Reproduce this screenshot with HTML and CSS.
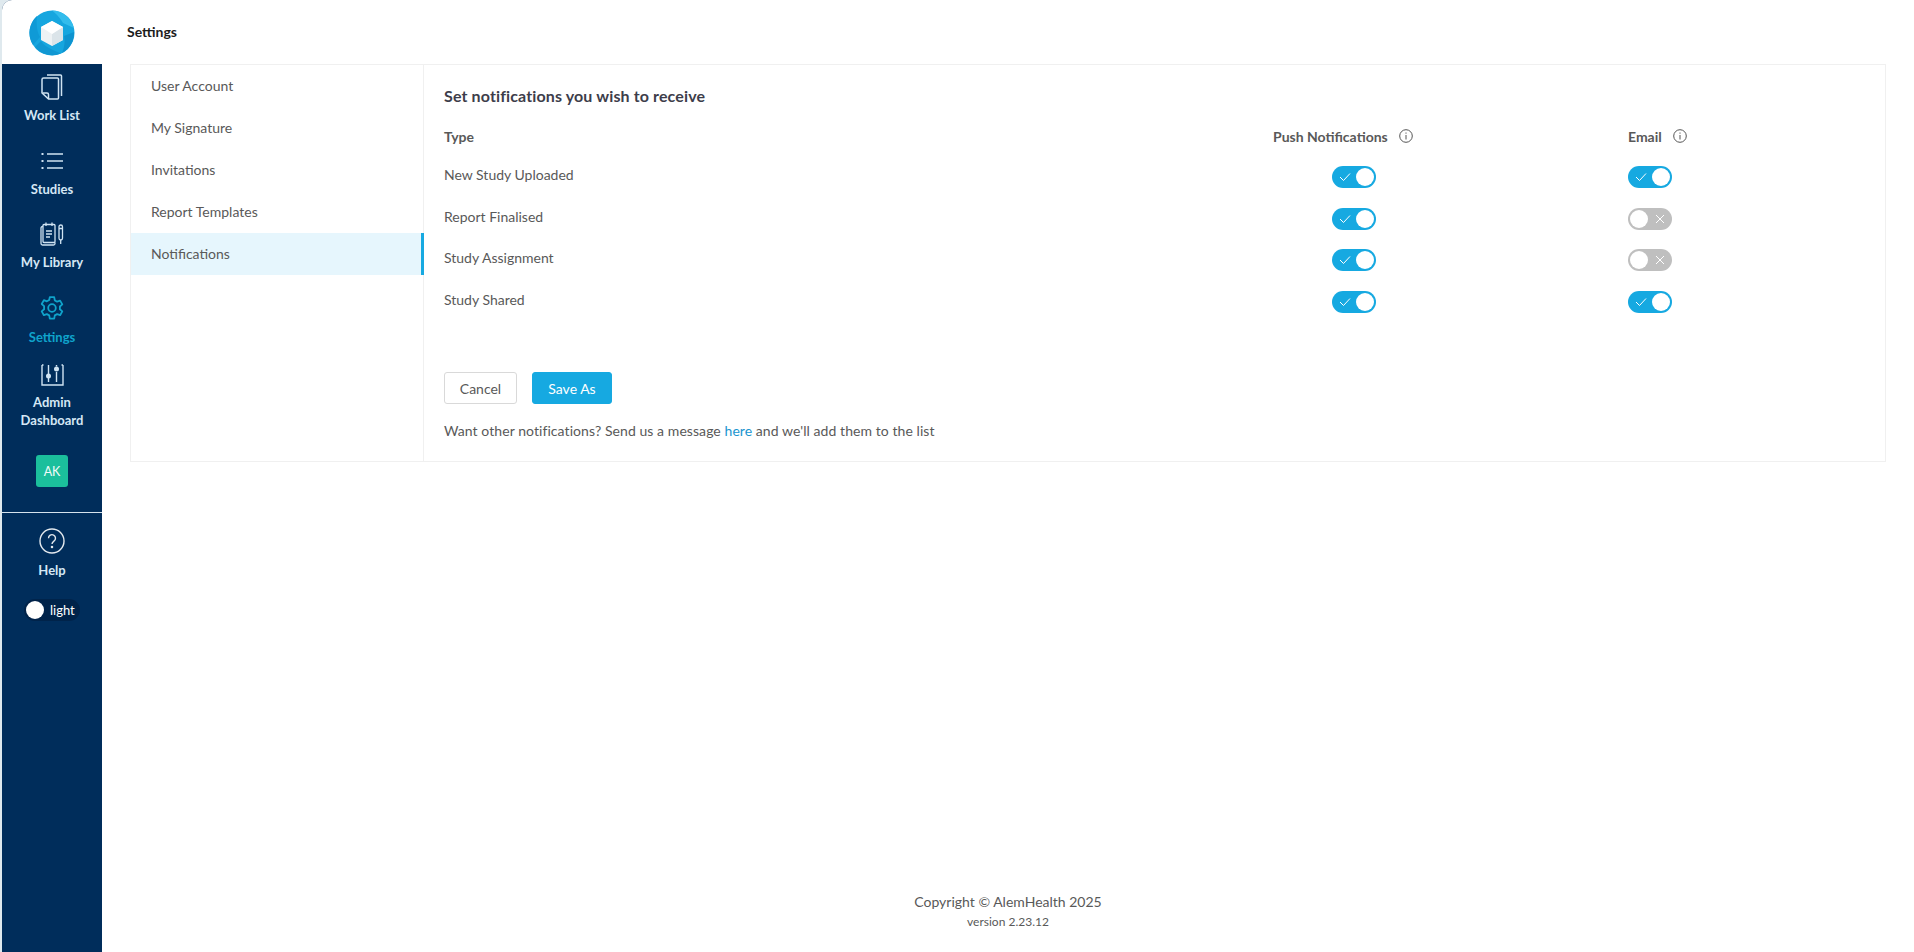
FILE: index.html
```html
<!DOCTYPE html>
<html lang="en">
<head>
<meta charset="utf-8">
<title>Settings</title>
<link rel="stylesheet" href="styles.css">
</head>
<body>
<div class="app">
  <aside class="sidebar">
    <div class="logo-wrap">
      <svg class="logo" viewBox="0 0 46 46" width="46" height="46">
        <circle cx="23" cy="23" r="22.500" fill="#16a6df"/>
        <path d="M23 .5A22.500 22.500 0 0 1 45 18L34 13C30 6 26 3 23 .5Z" fill="#33bcec"/>
        <path d="M45 22A22.500 22.500 0 0 1 33 43C36 36 36 30 35 26Z" fill="#0e93cf"/>
        <path d="M4 35A22.500 22.500 0 0 1 8 6C7 14 8 22 11 27Z" fill="#0f9ad6"/>
        <path d="M12 31C17 38 24 40 32 43.500A22.500 22.500 0 0 1 6 37Z" fill="#1097d2"/>
        <path d="M23 11L34 17V30L23 36L12 30V17Z" fill="#eef2f4"/>
        <path d="M23 24L34 17V30L23 36Z" fill="#dbe4e9"/>
        <path d="M23 11L34 17L23 24L12 17Z" fill="#ffffff"/>
      </svg>
    </div>
    <nav class="nav">
      <a class="nav-item nav-worklist">
        <svg class="nav-icon" viewBox="0 0 24 26" width="24" height="26" fill="none" stroke="#cfe3f2" stroke-width="1.500"><path d="M7 1h13.500a1 1 0 0 1 1 1V22"/><path d="M3.500 4h14a1 1 0 0 1 1 1v19a1 1 0 0 1-1 1H8.500L2 19V5.500A1.500 1.500 0 0 1 3.500 4Z"/><path d="M2.500 19H7a1.500 1.500 0 0 1 1.500 1.500V25"/></svg>
        <span>Work List</span>
      </a>
      <a class="nav-item nav-studies">
        <svg class="nav-icon" viewBox="0 0 22 18" width="22" height="18" fill="none" stroke="#cfe3f2" stroke-width="1.300"><path d="M6 2h16M6 9h16M6 16h16"/><path d="M.5 2h2M.5 9h2M.5 16h2" stroke-width="2"/></svg>
        <span>Studies</span>
      </a>
      <a class="nav-item nav-library">
        <svg class="nav-icon" viewBox="0 0 24 24" width="24" height="24" fill="none" stroke="#cfe3f2" stroke-width="1.300"><path d="M3 4.500H2.500A1.500 1.500 0 0 0 1 6v15.500A1.500 1.500 0 0 0 2.500 23h11a1.500 1.500 0 0 0 1.500-1.500v-1"/><rect x="3" y="2.500" width="12" height="18" rx="1"/><path d="M6 .5v3.500M12 .5v3.500M6 9h6M6 12h6M6 15h4"/><rect x="19" y="3" width="3.500" height="15" rx="1.750"/><path d="M19 6.500h3.500M20.700 18v4"/></svg>
        <span>My Library</span>
      </a>
      <a class="nav-item nav-settings active">
        <svg class="nav-icon" viewBox="0 0 24 24" width="24" height="24" fill="none" stroke="#0fa3cb" stroke-width="1.800" stroke-linejoin="round"><circle cx="12" cy="12" r="3.800"/><path d="M9.800 1.200h4.400l.6 3.200 2.300 1.300 3-1.100 2.200 3.800-2.400 2.100v2.800l2.400 2.100-2.200 3.800-3-1.100-2.300 1.300-.6 3.200H9.800l-.6-3.200-2.300-1.300-3 1.100-2.200-3.800 2.400-2.100V10.100L1.700 8l2.200-3.800 3 1.100 2.300-1.300Z"/></svg>
        <span>Settings</span>
      </a>
      <a class="nav-item nav-admin">
        <svg class="nav-icon" viewBox="0 0 23 22" width="23" height="22" fill="none" stroke="#cfe3f2" stroke-width="1.400"><path d="M1 1v20h21V1"/><path d="M1 1h1.500M20.500 1H22"/><path d="M7.500 1v9M7.500 14v4M15.500 1v1.500M15.500 8v10"/><circle cx="7.500" cy="12" r="1.800" fill="#cfe3f2"/><circle cx="15.500" cy="5" r="1.800" fill="#cfe3f2"/></svg>
        <span>Admin<br>Dashboard</span>
      </a>
    </nav>
    <div class="avatar">AK</div>
    <div class="divider"></div>
    <a class="nav-item nav-help">
      <svg class="nav-icon" viewBox="0 0 26 26" width="26" height="26" fill="none" stroke="#e3e9ee" stroke-width="1.400"><circle cx="13" cy="13" r="12"/><path d="M9.500 10.200a3.500 3.500 0 1 1 5.400 2.900c-1.300.9-1.900 1.500-1.900 3"/><circle cx="13" cy="19" r=".6" fill="#e3e9ee"/></svg>
      <span>Help</span>
    </a>
    <div class="theme-toggle"><span class="theme-knob"></span><span class="theme-label">light</span></div>
  </aside>

  <main class="main">
    <header class="page-header">Settings</header>
    <section class="card">
      <ul class="menu">
        <li class="menu-item">User Account</li>
        <li class="menu-item">My Signature</li>
        <li class="menu-item">Invitations</li>
        <li class="menu-item">Report Templates</li>
        <li class="menu-item selected">Notifications</li>
      </ul>
      <div class="panel">
        <h2 class="panel-title">Set notifications you wish to receive</h2>
        <div class="grid">
          <div class="head">Type</div>
          <div class="head">Push Notifications<svg class="info" viewBox="0 0 14 14" width="14" height="14" fill="none" stroke="#555" stroke-width="1"><circle cx="7" cy="7" r="6.300"/><path d="M7 6v4.500M7 3.500v1.200"/></svg></div>
          <div class="head">Email<svg class="info" viewBox="0 0 14 14" width="14" height="14" fill="none" stroke="#555" stroke-width="1"><circle cx="7" cy="7" r="6.300"/><path d="M7 6v4.500M7 3.500v1.200"/></svg></div>

          <div class="type">New Study Uploaded</div>
          <div class="cell-push"><span class="switch on"><svg class="mark" viewBox="0 0 12 10" width="12" height="10"><path d="M1 5l3.500 3.500L11 1.500"/></svg><span class="knob"></span></span></div>
          <div class="cell-email"><span class="switch on"><svg class="mark" viewBox="0 0 12 10" width="12" height="10"><path d="M1 5l3.500 3.500L11 1.500"/></svg><span class="knob"></span></span></div>

          <div class="type">Report Finalised</div>
          <div class="cell-push"><span class="switch on"><svg class="mark" viewBox="0 0 12 10" width="12" height="10"><path d="M1 5l3.500 3.500L11 1.500"/></svg><span class="knob"></span></span></div>
          <div class="cell-email"><span class="switch off"><span class="knob"></span><svg class="mark" viewBox="0 0 10 10" width="10" height="10"><path d="M1 1l8 8M9 1l-8 8"/></svg></span></div>

          <div class="type">Study Assignment</div>
          <div class="cell-push"><span class="switch on"><svg class="mark" viewBox="0 0 12 10" width="12" height="10"><path d="M1 5l3.500 3.500L11 1.500"/></svg><span class="knob"></span></span></div>
          <div class="cell-email"><span class="switch off"><span class="knob"></span><svg class="mark" viewBox="0 0 10 10" width="10" height="10"><path d="M1 1l8 8M9 1l-8 8"/></svg></span></div>

          <div class="type">Study Shared</div>
          <div class="cell-push"><span class="switch on"><svg class="mark" viewBox="0 0 12 10" width="12" height="10"><path d="M1 5l3.500 3.500L11 1.500"/></svg><span class="knob"></span></span></div>
          <div class="cell-email"><span class="switch on"><svg class="mark" viewBox="0 0 12 10" width="12" height="10"><path d="M1 5l3.500 3.500L11 1.500"/></svg><span class="knob"></span></span></div>
        </div>
        <div class="actions">
          <button class="btn">Cancel</button>
          <button class="btn primary">Save As</button>
        </div>
        <p class="note">Want other notifications? Send us a message <a class="link">here</a> and we'll add them to the list</p>
      </div>
    </section>
    <footer class="footer">
      <div class="copyright">Copyright © AlemHealth 2025</div>
      <div class="version">version 2.23.12</div>
    </footer>
  </main>
</div>
</body>
</html>
```
FILE: styles.css
```css
* { box-sizing: border-box; }
html, body { margin: 0; height: 100%; }
body { font-family: Lato, "Noto Sans", sans-serif; font-size: 14px; color: #555; background: #dfe9ee; overflow: hidden; }
.app { display: flex; height: 952px; margin-left: 2px; background: #fff; border-top-left-radius: 10px; overflow: hidden; }
.sidebar { width: 100px; flex: none; background: #002d5b; display: flex; flex-direction: column; align-items: center; color: #dce9f3; }
.logo-wrap { width: 100%; height: 64px; background: #fff; display: flex; justify-content: center; padding-top: 10px; flex: none; }
.logo { display: block; }
.nav { display: flex; flex-direction: column; width: 100%; }
.nav-item { display: flex; flex-direction: column; align-items: center; text-align: center; font-size: 13px; font-weight: 700; line-height: 18px; color: #d5e7f5; width: 100%; }
.nav-worklist { height: 74px; padding-top: 10px; }
.nav-worklist span { margin-top: 6px; }
.nav-studies { height: 74px; padding-top: 14px; }
.nav-studies span { margin-top: 10px; }
.nav-library { height: 74px; padding-top: 10px; }
.nav-library span { margin-top: 7px; }
.nav-settings { height: 73px; padding-top: 10px; }
.nav-settings span { margin-top: 8px; }
.active { color: #0fa3cb; }
.nav-admin { height: 88px; padding-top: 5px; }
.nav-admin span { margin-top: 7px; }
.nav-icon { display: block; flex: none; }
.avatar { width: 32px; height: 32px; border-radius: 3px; background: #1bbf9c; color: #f2fbf9; font-size: 12.500px; display: flex; align-items: center; justify-content: center; margin-top: 8px; flex: none; }
.divider { width: 100%; height: 1px; background: #d5e3ee; margin-top: 25px; flex: none; }
.nav-help { margin-top: 15px; }
.nav-help span { margin-top: 7px; }
.theme-toggle { width: 56px; height: 22px; border-radius: 11px; background: #00234a; margin-top: 20px; display: flex; align-items: center; padding-left: 2px; }
.theme-knob { width: 18px; height: 18px; border-radius: 50%; background: #fff; flex: none; }
.theme-label { color: #fff; font-size: 13px; margin-left: 6px; }
.main { flex: 1; display: flex; flex-direction: column; min-width: 0; padding: 0 28px 0 28px; }
.page-header { height: 64px; display: flex; align-items: center; margin-left: -3px; padding-bottom: 2px; font-size: 14px; font-weight: 700; color: #1c1c1c; }
.card { display: flex; height: 398px; border: 1px solid #f0f0f0; }
.menu { list-style: none; margin: 0; padding: 0; width: 293px; flex: none; border-right: 1px solid #f0f0f0; }
.menu-item { height: 42px; display: flex; align-items: center; padding-left: 20px; padding-bottom: 2px; font-size: 14px; color: #595959; }
.selected { background: #e6f6fd; border-right: 3px solid #16a9e1; width: 293px; height: 42px; margin-right: -1px; }
.panel { flex: 1; padding: 21px 20px 0; }
.panel-title { margin: 0; font-size: 16px; font-weight: 700; letter-spacing: .13px; color: #3d3d4a; line-height: 20px; }
.grid { display: grid; grid-template-columns: 829px 355px 1fr; grid-template-rows: 35px; grid-auto-rows: 41.700px; margin-top: 12.500px; align-items: center; }
.head { font-size: 14px; font-weight: 700; color: #595959; display: flex; align-items: center; }
.info { margin-left: 11px; display: block; }
.type { font-size: 14px; color: #595959; }
.cell-push { padding-left: 59px; padding-top: 5px; }
.cell-email { padding-top: 5px; }
.switch { display: flex; align-items: center; width: 44px; height: 22px; border-radius: 11px; padding: 0 2px; justify-content: space-between; }
.switch.on { background: #16a9e1; padding-left: 7px; }
.switch.off { background: #bfbfbf; padding-right: 7px; }
.knob { width: 18px; height: 18px; border-radius: 50%; background: #fff; flex: none; }
.mark { display: block; fill: none; stroke: #fff; stroke-width: 1; }
.actions { display: flex; gap: 15px; margin-top: 52px; }
.btn { height: 32px; width: 73px; padding: 0; font: 14px Lato, "Noto Sans", sans-serif; color: #595959; background: #fff; border: 1px solid #d9d9d9; border-radius: 3px; }
.primary { width: 80px; background: #16a9e1; border-color: #16a9e1; color: #fff; }
.note { margin: 17px 0 0; font-size: 14px; line-height: 20px; letter-spacing: .07px; color: #595959; }
.link { color: #1b95cf; }
.footer { margin-top: auto; height: 60px; text-align: center; }
.copyright { font-size: 14px; line-height: 20px; color: #595959; }
.version { font-size: 12px; line-height: 18px; margin-top: 1px; color: #595959; }
```
